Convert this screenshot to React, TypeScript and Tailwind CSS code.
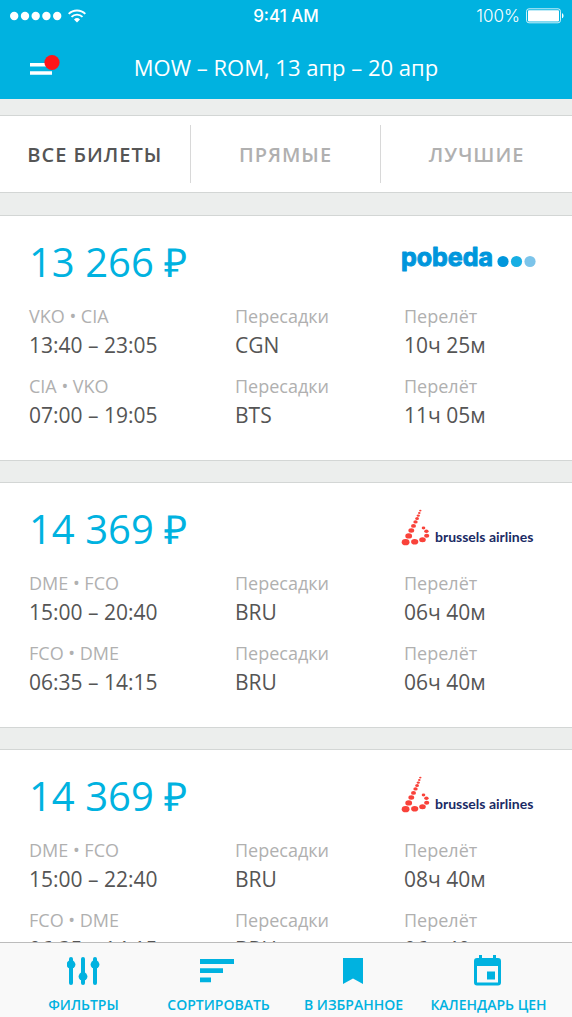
import { useState } from 'react';

type Airline = 'pobeda' | 'brussels';

type Leg = {
  route: string;
  time: string;
  stop: string;
  duration: string;
};

type Ticket = {
  id: number;
  price: string;
  airline: Airline;
  legs: Leg[];
};

const tabs = ['ВСЕ БИЛЕТЫ', 'ПРЯМЫЕ', 'ЛУЧШИЕ'];

const tickets: Ticket[] = [
  {
    id: 1,
    price: '13 266 ₽',
    airline: 'pobeda',
    legs: [
      { route: 'VKO • CIA', time: '13:40 – 23:05', stop: 'CGN', duration: '10ч 25м' },
      { route: 'CIA • VKO', time: '07:00 – 19:05', stop: 'BTS', duration: '11ч 05м' },
    ],
  },
  {
    id: 2,
    price: '14 369 ₽',
    airline: 'brussels',
    legs: [
      { route: 'DME • FCO', time: '15:00 – 20:40', stop: 'BRU', duration: '06ч 40м' },
      { route: 'FCO • DME', time: '06:35 – 14:15', stop: 'BRU', duration: '06ч 40м' },
    ],
  },
  {
    id: 3,
    price: '14 369 ₽',
    airline: 'brussels',
    legs: [
      { route: 'DME • FCO', time: '15:00 – 22:40', stop: 'BRU', duration: '08ч 40м' },
      { route: 'FCO • DME', time: '06:35 – 14:15', stop: 'BRU', duration: '06ч 40м' },
    ],
  },
];

function PobedaLogo() {
  return (
    <svg viewBox="0 0 136 32" className="h-8 w-[136px] overflow-visible" role="img" aria-label="pobeda">
      <text
        x="0"
        y="20"
        fontSize="25"
        fill="#0096dc"
        stroke="#0096dc"
        strokeWidth="1"
        strokeLinejoin="round"
        className="font-['Inter'] font-bold"
      >
        pobeda
      </text>
      <circle cx="102" cy="15.500" r="5.600" fill="#0096dc" />
      <circle cx="115.500" cy="15.500" r="5.600" fill="#17aee3" />
      <circle cx="129" cy="15.500" r="5.600" fill="#7cc4ea" />
    </svg>
  );
}

function BrusselsLogo() {
  return (
    <svg viewBox="0 0 136 40" className="h-10 w-[136px] overflow-visible" role="img" aria-label="brussels airlines">
      <g fill="#f9423a">
        <ellipse cx="19.300" cy="1.600" rx="1.200" ry="0.900" />
        <ellipse cx="18.300" cy="4" rx="1.300" ry="1" />
        <ellipse cx="17.300" cy="6.600" rx="1.600" ry="1.200" />
        <ellipse cx="16.100" cy="9.600" rx="1.900" ry="1.500" />
        <ellipse cx="14.500" cy="12.900" rx="2.200" ry="1.700" />
        <ellipse cx="12.500" cy="16.900" rx="2.500" ry="1.900" />
        <ellipse cx="10.300" cy="21.500" rx="2.900" ry="2.200" />
        <ellipse cx="7.700" cy="26.900" rx="3.400" ry="2.600" />
        <ellipse cx="4.600" cy="33.200" rx="3.900" ry="3.100" />
        <ellipse cx="13.700" cy="32.800" rx="3.600" ry="2.800" />
        <ellipse cx="21.500" cy="30.800" rx="3.300" ry="2.500" />
        <ellipse cx="25.700" cy="26.700" rx="2.600" ry="2" />
        <ellipse cx="25.400" cy="22.200" rx="2.200" ry="1.700" />
        <ellipse cx="22.500" cy="19" rx="1.800" ry="1.400" />
      </g>
      <text x="34" y="33" fontSize="14" fill="#1a2a64" className="font-['Lato'] font-bold">
        brussels airlines
      </text>
    </svg>
  );
}

function StatusBar() {
  return (
    <div className="grid h-8 grid-cols-3 items-center px-2 font-['Inter'] text-[17px] leading-8">
      <div className="flex items-center gap-[6px] pl-[2px]">
        <svg viewBox="0 0 52 10" className="h-[10px] w-[52px]" fill="#fff" aria-hidden="true">
          <circle cx="4.200" cy="5" r="4.200" />
          <circle cx="15" cy="5" r="4.200" />
          <circle cx="25.700" cy="5" r="4.200" />
          <circle cx="36.400" cy="5" r="4.200" />
          <circle cx="47.200" cy="5" r="4.200" />
        </svg>
        <svg viewBox="0 0 18 14" className="h-[14px] w-[18px]" fill="none" stroke="#fff" aria-hidden="true">
          <path d="M0.700 4.900a11.800 11.800 0 0 1 16.600 0" strokeWidth="1.900" />
          <path d="M3.500 7.900a7.800 7.800 0 0 1 11 0" strokeWidth="1.900" />
          <path d="M9 13.500 6 10.400a4.300 4.300 0 0 1 6 0z" fill="#fff" stroke="none" />
        </svg>
      </div>
      <div className="text-center font-medium">9:41 AM</div>
      <div className="flex items-center justify-end gap-[6px]">
        <span className="font-light">100%</span>
        <svg viewBox="0 0 38 16" className="h-4 w-[38px]" aria-hidden="true">
          <rect x="0.500" y="0.800" width="34" height="14" rx="2.500" fill="none" stroke="#fff" strokeOpacity="0.8" />
          <rect x="2" y="2.200" width="31" height="11.200" rx="1" fill="#fff" />
          <path d="M36 5.300c2 .6 2 4.400 0 5z" fill="#fff" />
        </svg>
      </div>
    </div>
  );
}

function Header() {
  return (
    <header className="shrink-0 bg-[#00b2e0] text-white">
      <StatusBar />
      <div className="grid h-[67px] grid-cols-[30px_1fr_30px] items-center px-[30px]">
        <button type="button" aria-label="Меню" className="h-10">
          <svg viewBox="0 0 30 24" className="h-6 w-[30px]" aria-hidden="true">
            <path d="M0 9h22v3.500H0zM0 17.200h22v3.500H0z" fill="#fff" />
            <circle cx="22" cy="8.500" r="7.600" fill="#ff1519" />
          </svg>
        </button>
        <h1 className="pt-[2px] text-center text-[22px] leading-8 whitespace-nowrap">
          MOW – ROM, 13 апр – 20 апр
        </h1>
      </div>
    </header>
  );
}

function TicketCard({ ticket }: { ticket: Ticket }) {
  return (
    <article className="border-y border-[#d3d6d5] bg-white px-[29px] pt-4 pb-[30px]">
      <div className="mb-[10px] flex items-center justify-between">
        <h2 className="text-[40px] leading-[60px] text-[#00b2e0]">{ticket.price}</h2>
        <div className="mr-[6px]">
          {ticket.airline === 'pobeda' ? <PobedaLogo /> : <BrusselsLogo />}
        </div>
      </div>
      <div className="flex flex-col gap-3">
        {ticket.legs.map((leg) => (
          <dl key={leg.route} className="grid grid-cols-[206fr_169fr_139fr]">
            <Field label={leg.route} value={leg.time} />
            <Field label="Пересадки" value={leg.stop} />
            <Field label="Перелёт" value={leg.duration} />
          </dl>
        ))}
      </div>
    </article>
  );
}

function Field({ label, value }: { label: string; value: string }) {
  return (
    <div className="whitespace-nowrap">
      <dt className="text-[18px] leading-7 text-[#b0b0b0]">{label}</dt>
      <dd className="text-[21px] leading-[30px] text-[#555]">{value}</dd>
    </div>
  );
}

function FiltersIcon() {
  return (
    <svg viewBox="0 0 34 30" className="h-[30px] w-[34px]" fill="#00b2e0" aria-hidden="true">
      <rect x="2" y="1" width="4" height="28" rx="2" />
      <rect x="14" y="1" width="4" height="28" rx="2" />
      <rect x="26" y="1" width="4" height="28" rx="2" />
      <circle cx="4" cy="8.500" r="4.400" />
      <circle cx="16" cy="20.500" r="4.400" />
      <circle cx="28" cy="8.500" r="4.400" />
    </svg>
  );
}

function SortIcon() {
  return (
    <svg viewBox="0 0 38 30" className="h-[30px] w-[38px]" fill="#00b2e0" aria-hidden="true">
      <path d="M0 3h34v5H0zM0 12.300h23v4.700H0zM0 21.500h11v4.700H0z" />
    </svg>
  );
}

function BookmarkIcon() {
  return (
    <svg viewBox="0 0 34 30" className="h-[30px] w-[34px]" fill="#00b2e0" aria-hidden="true">
      <path d="M6 2h20v26l-10-5.500L6 28z" />
    </svg>
  );
}

function CalendarIcon() {
  return (
    <svg viewBox="0 0 34 30" className="h-[30px] w-[34px] overflow-visible" fill="#00b2e0" aria-hidden="true">
      <path
        fillRule="evenodd"
        d="M7 -1h3v3h11v-3h3v3h2a3 3 0 0 1 3 3v21.500a3 3 0 0 1-3 3H5a3 3 0 0 1-3-3V5a3 3 0 0 1 3-3h2zM5 10v16.500h21V10z"
      />
      <rect x="15" y="15.500" width="8" height="8" />
    </svg>
  );
}

const actions = [
  { label: 'ФИЛЬТРЫ', icon: FiltersIcon },
  { label: 'СОРТИРОВАТЬ', icon: SortIcon },
  { label: 'В ИЗБРАННОЕ', icon: BookmarkIcon },
  { label: 'КАЛЕНДАРЬ ЦЕН', icon: CalendarIcon },
];

export default function App() {
  const [activeTab, setActiveTab] = useState(0);

  return (
    <div className="flex h-screen flex-col bg-[#eceeed] font-['Open_Sans',sans-serif]">
      <Header />

      <main className="min-h-0 flex-1 overflow-hidden pt-4">
        {/* Tabs */}
        <nav className="grid h-[78px] grid-cols-3 items-center divide-x divide-[#d8d8d8] border-y border-[#d3d6d5] bg-white">
          {tabs.map((tab, i) => (
            <button
              key={tab}
              type="button"
              onClick={() => setActiveTab(i)}
              className={`h-[58px] pt-[2px] text-[20px] font-semibold tracking-wider ${
                i === activeTab ? 'text-[#555]' : 'text-[#b0b0b0]'
              }`}
            >
              {tab}
            </button>
          ))}
        </nav>

        {/* Tickets */}
        <section className="mt-[22px] flex flex-col gap-[21px]">
          {tickets.map((ticket) => (
            <TicketCard key={ticket.id} ticket={ticket} />
          ))}
        </section>
      </main>

      {/* Bottom bar */}
      <footer className="grid h-[75px] shrink-0 grid-cols-4 border-t border-[#bcbcbc] bg-[#f9f9f9] px-4">
        {actions.map(({ label, icon: Icon }) => (
          <button
            key={label}
            type="button"
            className="flex flex-col items-center gap-[9px] pt-[13px] text-[14px] leading-5 font-semibold whitespace-nowrap text-[#00b2e0]"
          >
            <Icon />
            {label}
          </button>
        ))}
      </footer>
    </div>
  );
}
